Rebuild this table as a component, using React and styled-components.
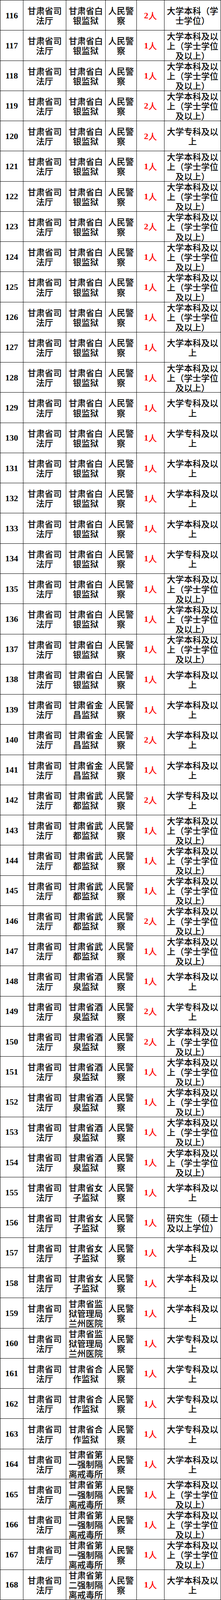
import React from "react";
import styled, { createGlobalStyle } from "styled-components";

const GlobalStyle = createGlobalStyle`
  html, body {
    margin: 0;
    padding: 0;
    background: #fff;
    overflow: hidden;
  }
  body {
    font-family: "Noto Sans CJK SC", sans-serif;
    color: #000;
  }
`;

const B1 = "大学本科（学士学位）";
const BX = "大学本科及以上（学士学位及以上）";
const ZK = "大学专科及以上";
const BK = "大学本科及以上";
const YJS = "研究生（硕士及以上学位）";

const BY = "甘肃省白银监狱";
const JC = "甘肃省金昌监狱";
const WD = "甘肃省武都监狱";
const JQ = "甘肃省酒泉监狱";
const NZ = "甘肃省女子监狱";
const LZ = "甘肃省监狱管理局兰州医院";
const HZ = "甘肃省合作监狱";
const D1 = "甘肃省第一强制隔离戒毒所";
const D2 = "甘肃省第二强制隔离戒毒所";

const rows = [
  [116, BY, 2, B1],
  [117, BY, 1, BX],
  [118, BY, 1, BX],
  [119, BY, 2, BX],
  [120, BY, 2, ZK],
  [121, BY, 1, BX],
  [122, BY, 1, BX],
  [123, BY, 2, BX],
  [124, BY, 1, BX],
  [125, BY, 1, BX],
  [126, BY, 1, BX],
  [127, BY, 1, BK],
  [128, BY, 1, BX],
  [129, BY, 1, ZK],
  [130, BY, 1, ZK],
  [131, BY, 1, BK],
  [132, BY, 1, BK],
  [133, BY, 1, BK],
  [134, BY, 1, ZK],
  [135, BY, 1, BX],
  [136, BY, 1, BX],
  [137, BY, 1, BX],
  [138, BY, 1, BK],
  [139, JC, 1, BK],
  [140, JC, 2, BK],
  [141, JC, 1, BK],
  [142, WD, 2, ZK],
  [143, WD, 1, BX],
  [144, WD, 1, BX],
  [145, WD, 1, BX],
  [146, WD, 2, BX],
  [147, WD, 1, BX],
  [148, JQ, 1, BK],
  [149, JQ, 2, ZK],
  [150, JQ, 2, BX],
  [151, JQ, 1, BX],
  [152, JQ, 1, BX],
  [153, JQ, 1, BX],
  [154, JQ, 1, BX],
  [155, NZ, 1, BK],
  [156, NZ, 1, YJS],
  [157, NZ, 1, BK],
  [158, NZ, 1, BK],
  [159, LZ, 1, BK],
  [160, LZ, 1, ZK],
  [161, HZ, 1, ZK],
  [162, HZ, 1, ZK],
  [163, HZ, 1, ZK],
  [164, D1, 1, BK],
  [165, D1, 1, BX],
  [166, D1, 1, BX],
  [167, D1, 1, BX],
  [168, D2, 1, BK],
];

// the sheet fills the window; sizes are relative to a 567 x 4241 page
const Table = styled.div`
  width: 100vw;
  height: 100vh;
  box-sizing: border-box;
  border-top: 1px solid #000;
  border-left: 1px solid #000;
  display: grid;
  grid-template-columns: 59fr 110fr 101fr 80fr 71fr 145fr;
  grid-template-rows: repeat(${(p) => p.$rows}, minmax(0, 1fr));
`;

const Cell = styled.div`
  box-sizing: border-box;
  min-width: 0;
  min-height: 0;
  display: flex;
  align-items: center;
  justify-content: center;
  text-align: center;
  padding: 0 0.7vw;
  border-right: 1px solid #000;
  border-bottom: 1px solid #000;
  font-size: 3.88vw;
  line-height: 0.613vh;
  font-weight: 500;
  word-break: break-all;
`;

const NumCell = styled(Cell)`
  font-family: "Liberation Serif", serif;
  font-weight: 700;
  padding: 0;
`;

const CountCell = styled(Cell)`
  color: #ff0000;
  padding: 0;
  white-space: nowrap;
`;

const Digit = styled.span`
  font-family: "Liberation Serif", serif;
  font-weight: 700;
`;

export default function App() {
  return (
    <>
      <GlobalStyle />
      <Table $rows={rows.length}>
        {rows.map(([no, unit, count, edu]) => (
          <React.Fragment key={no}>
            <NumCell>{no}</NumCell>
            <Cell>甘肃省司法厅</Cell>
            <Cell>{unit}</Cell>
            <Cell>人民警察</Cell>
            <CountCell>
              <Digit>{count}</Digit>人
            </CountCell>
            <Cell>{edu}</Cell>
          </React.Fragment>
        ))}
      </Table>
    </>
  );
}
